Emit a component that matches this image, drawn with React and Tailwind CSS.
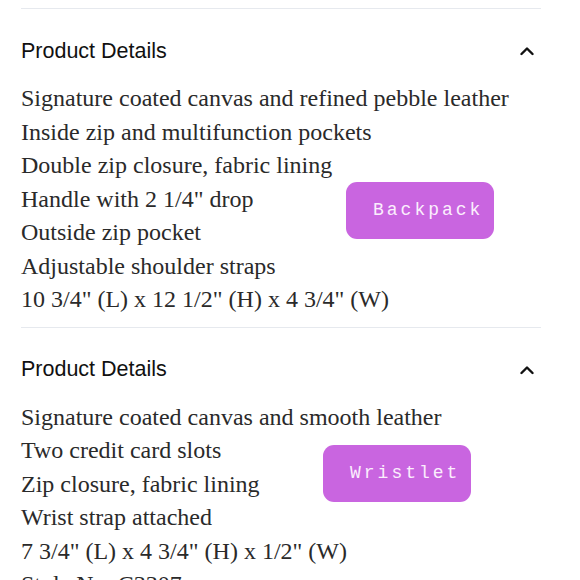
import React from 'react';

const sections = [
  {
    title: 'Product Details',
    lines: [
      'Signature coated canvas and refined pebble leather',
      'Inside zip and multifunction pockets',
      'Double zip closure, fabric lining',
      'Handle with 2 1/4" drop',
      'Outside zip pocket',
      'Adjustable shoulder straps',
      '10 3/4" (L) x 12 1/2" (H) x 4 3/4" (W)',
    ],
    tag: 'Backpack',
    tagPos: 'left-[325px] top-[100px]',
  },
  {
    title: 'Product Details',
    lines: [
      'Signature coated canvas and smooth leather',
      'Two credit card slots',
      'Zip closure, fabric lining',
      'Wrist strap attached',
      '7 3/4" (L) x 4 3/4" (H) x 1/2" (W)',
      'Style No. C3307',
    ],
    tag: 'Wristlet',
    tagPos: 'left-[302px] top-[44px]',
  },
];

function Chevron() {
  return (
    <svg width="14" height="10" viewBox="0 0 14 10" fill="none">
      <path d="M1.5 8 L7 2.5 L12.5 8" stroke="#111" strokeWidth="2.4" strokeLinecap="round" strokeLinejoin="round" />
    </svg>
  );
}

function Section({ s }) {
  return (
    <div className="border-t border-[#e6e9ee] pt-[30px] pb-[10px]">
      <div className="flex items-center justify-between h-[24px] pr-[7px]">
        <span className="text-[21.5px] text-[#111] font-['Liberation_Sans',Arial,sans-serif]">{s.title}</span>
        <Chevron />
      </div>
      <div className="relative mt-[19px]">
        {s.lines.map((l, i) => (
          <div key={i} className="h-[33.5px] leading-[33.5px] text-[24px] text-[#2a2a2a] whitespace-nowrap font-['Liberation_Serif','Times_New_Roman',serif]">
            {l}
          </div>
        ))}
        <div className={`absolute ${s.tagPos} w-[148px] h-[57px] rounded-[11px] bg-[#c965e0] flex items-center pl-[27px] text-[18px] tracking-[3px] text-[#fbeefd] font-['Liberation_Mono','Courier_New',monospace]`}>
          {s.tag}
        </div>
      </div>
    </div>
  );
}

export default function App() {
  return (
    <div className="w-[580px] h-[580px] overflow-hidden bg-white">
      <div className="ml-[21px] w-[520px] pt-[8px]">
        {sections.map((s, i) => (
          <Section key={i} s={s} />
        ))}
      </div>
    </div>
  );
}
